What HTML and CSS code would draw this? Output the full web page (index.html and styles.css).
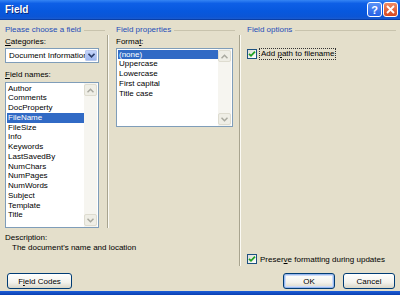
FILE: index.html
```html
<!DOCTYPE html>
<html>
<head>
<meta charset="utf-8">
<link rel="stylesheet" href="styles.css">
</head>
<body>
<div class="window">
  <div class="titlebar">
    <span class="title">Field</span>
    <div class="tb-btns">
      <span class="tb-btn help">?</span>
      <span class="tb-btn close"><svg width="9" height="9" viewBox="0 0 9 9"><path d="M1 1L8 8M8 1L1 8" stroke="#fff" stroke-width="1.8"/></svg></span>
    </div>
  </div>
  <div class="main">
    <div class="leftpart">
      <div class="toprow">
        <div class="col col-left">
          <div class="group-head"><span>Please choose a field</span></div>
          <div class="label"><u>C</u>ategories:</div>
          <div class="combo">
            <span class="combo-text">Document Information</span>
            <span class="combo-btn"><svg width="7" height="5" viewBox="0 0 7 5"><path d="M0.5 0.8L3.5 3.8L6.5 0.8" fill="none" stroke="#2c3f6b" stroke-width="1.6"/></svg></span>
          </div>
          <div class="label label-gap"><u>F</u>ield names:</div>
          <div class="listbox names">
            <div class="items">
              <div class="item">Author</div>
              <div class="item">Comments</div>
              <div class="item">DocProperty</div>
              <div class="item sel">FileName</div>
              <div class="item">FileSize</div>
              <div class="item">Info</div>
              <div class="item">Keywords</div>
              <div class="item">LastSavedBy</div>
              <div class="item">NumChars</div>
              <div class="item">NumPages</div>
              <div class="item">NumWords</div>
              <div class="item">Subject</div>
              <div class="item">Template</div>
              <div class="item">Title</div>
            </div>
            <div class="scroll">
              <span class="sbtn"><svg width="7" height="5" viewBox="0 0 7 5"><path d="M0.5 4.2L3.5 1.2L6.5 4.2" fill="none" stroke="#a9a9a0" stroke-width="1.5"/></svg></span>
              <span class="sbtn"><svg width="7" height="5" viewBox="0 0 7 5"><path d="M0.5 0.8L3.5 3.8L6.5 0.8" fill="none" stroke="#a9a9a0" stroke-width="1.5"/></svg></span>
            </div>
          </div>
        </div>
        <div class="vsep"></div>
        <div class="col col-mid">
          <div class="group-head"><span>Field properties</span></div>
          <div class="label">Forma<u>t</u>:</div>
          <div class="listbox formats">
            <div class="items">
              <div class="item sel">(none)</div>
              <div class="item">Uppercase</div>
              <div class="item">Lowercase</div>
              <div class="item">First capital</div>
              <div class="item">Title case</div>
            </div>
            <div class="scroll">
              <span class="sbtn"><svg width="7" height="5" viewBox="0 0 7 5"><path d="M0.5 4.2L3.5 1.2L6.5 4.2" fill="none" stroke="#a9a9a0" stroke-width="1.5"/></svg></span>
              <span class="sbtn"><svg width="7" height="5" viewBox="0 0 7 5"><path d="M0.5 0.8L3.5 3.8L6.5 0.8" fill="none" stroke="#a9a9a0" stroke-width="1.5"/></svg></span>
            </div>
          </div>
        </div>
      </div>
      <div class="desc">
        <div>Description:</div>
        <div class="desc-text">The document's name and location</div>
      </div>
    </div>
    <div class="vsep vsep-right"></div>
    <div class="col col-right">
      <div class="group-head"><span>Field options</span></div>
      <div class="check-row first">
        <span class="checkbox"><svg width="8" height="8" viewBox="0 0 8 8"><path d="M1 3.8L3 5.8L7 1.6" fill="none" stroke="#21a121" stroke-width="1.8"/></svg></span>
        <span class="focus">Add <u>p</u>ath to filename</span>
      </div>
      <div class="spacer"></div>
      <div class="check-row">
        <span class="checkbox"><svg width="8" height="8" viewBox="0 0 8 8"><path d="M1 3.8L3 5.8L7 1.6" fill="none" stroke="#21a121" stroke-width="1.8"/></svg></span>
        <span class="check-label">Preser<u>v</u>e formatting during updates</span>
      </div>
    </div>
  </div>
  <div class="buttons">
    <span class="btn codes">F<u>i</u>eld Codes</span>
    <span class="btn-spacer"></span>
    <span class="btn default">OK</span>
    <span class="btn">Cancel</span>
  </div>
  <div class="frame-bottom"></div>
</div>
</body>
</html>
```
FILE: styles.css
```css
* { box-sizing: border-box; }
html, body { margin: 0; padding: 0; }
body {
  font-family: "Liberation Sans", Arial, sans-serif;
  font-size: 8px;
  color: #000;
  background: #e4dfcb;
}
u { text-decoration: underline; text-underline-offset: 1px; }
.window {
  width: 400px;
  height: 295px;
  display: flex;
  flex-direction: column;
  background: #e4dfcb;
  overflow: hidden;
}
.titlebar {
  height: 20px;
  flex: none;
  display: flex;
  align-items: center;
  padding: 0 2px 0 5px;
  background: linear-gradient(#3585f4 0%, #0e5fe6 18%, #0758de 60%, #0b55d6 88%, #1a5bcf 100%);
  border-bottom: 1px solid #0a3fa8;
}
.title {
  color: #fff;
  font-weight: bold;
  font-size: 10px;
  text-shadow: 1px 1px 0 #0a2a80;
}
.tb-btns { margin-left: auto; display: flex; gap: 1px; }
.tb-btn {
  width: 15px;
  height: 15px;
  border: 1px solid #fff;
  border-radius: 3px;
  display: flex;
  align-items: center;
  justify-content: center;
  color: #fff;
  font-weight: bold;
  font-size: 11px;
}
.help { background: linear-gradient(#5a93f7, #2560e6); }
.close { background: linear-gradient(#ef8a65, #d8481f); }
.main {
  height: 246px;
  flex: none;
  display: flex;
  padding: 5px 0 0 5px;
}
.leftpart { display: flex; flex-direction: column; width: 234px; }
.toprow { display: flex; padding-bottom: 5px; }
.col { display: flex; flex-direction: column; }
.col-left { width: 100px; }
.col-mid { width: 119px; }
.col-right { flex: 1; padding-right: 4px; padding-bottom: 1px; }
.group-head {
  height: 10px;
  line-height: 10px;
  display: flex;
  align-items: center;
  color: #1f4db8;
  white-space: nowrap;
}
.group-head::after {
  content: "";
  flex: 1;
  height: 1px;
  margin-left: 3px;
  background: #c8c3ad;
}
.label { height: 10px; line-height: 10px; margin-top: 2px; }
.label-gap { margin-top: 7px; }
.combo {
  width: 94px;
  height: 15px;
  margin-top: 1px;
  background: #fff;
  border: 1px solid #7f9db9;
  display: flex;
  align-items: center;
  padding: 1px;
}
.combo-text {
  flex: 1;
  padding-left: 2px;
  overflow: hidden;
  white-space: nowrap;
}
.combo-btn {
  width: 12px;
  height: 11px;
  background: linear-gradient(#c4d4fa, #9db6ef);
  border: 1px solid #b9c9ee;
  border-radius: 1px;
  display: flex;
  align-items: center;
  justify-content: center;
}
.listbox {
  background: #fff;
  border: 1px solid #7f9db9;
  display: flex;
  padding: 0 1px 0 1px;
}
.names { width: 94px; height: 146px; margin-top: 2px; }
.formats { width: 117px; height: 79px; margin-top: 1px; }
.items { flex: 1; padding-top: 0.5px; }
.item { height: 9.77px; line-height: 9.77px; padding-left: 1px; white-space: nowrap; }
.item.sel { background: #316ac5; color: #fff; }
.scroll {
  width: 13px;
  background: #f6f5f0;
  display: flex;
  flex-direction: column;
  justify-content: space-between;
  padding: 1px 0;
}
.sbtn {
  height: 12px;
  background: #efeee6;
  border: 1px solid #dedcd0;
  border-radius: 2px;
  display: flex;
  align-items: center;
  justify-content: center;
}
.vsep {
  width: 2px;
  margin: 10px 7px 0 2px;
  border-left: 1px solid #a8a48f;
  border-right: 1px solid #fbfaf4;
}
.vsep-right { margin: 10px 6px 0 0; }
.desc { line-height: 10px; }
.desc-text { padding-left: 7px; }
.check-row {
  display: flex;
  align-items: center;
  height: 12px;
  white-space: nowrap;
}
.check-row.first { margin-top: 13px; }
.checkbox {
  width: 10px;
  height: 10px;
  border: 1px solid #1c5180;
  background: linear-gradient(135deg, #dcdcd7, #fff);
  display: flex;
  align-items: center;
  justify-content: center;
  margin-right: 2px;
}
.focus {
  border: 1px dotted #333;
  padding: 0 1px;
  line-height: 10px;
}
.check-label { padding-left: 1px; }
.spacer { flex: 1; }
.buttons {
  display: flex;
  padding: 7px 5px 0 7px;
  gap: 8px;
  height: 25px;
  flex: none;
}
.btn {
  width: 52px;
  height: 16px;
  border: 1px solid #003c74;
  border-radius: 3px;
  background: linear-gradient(#ffffff, #f3f2ec 60%, #d9d6c8);
  display: flex;
  align-items: center;
  justify-content: center;
}
.btn.codes { width: 65px; }
.btn.default { box-shadow: inset 0 0 0 1px #98b8ef, inset 0 0 0 2px #cddcf7; }
.btn-spacer { flex: 1; }
.frame-bottom {
  height: 4px;
  flex: none;
  background: linear-gradient(#1d5ed8, #0a3fb0);
}
```
